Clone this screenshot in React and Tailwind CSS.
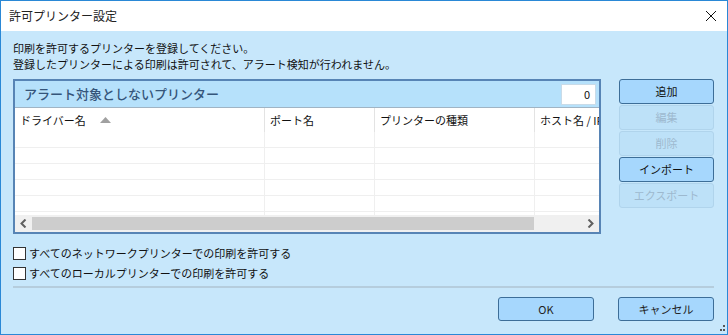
import React from 'react';

const font = { fontFamily: '"Noto Sans CJK JP", "Noto Sans", sans-serif' };

const columns = [
    { label: 'ドライバー名', width: 'w-[250px]', sort: true },
    { label: 'ポート名', width: 'w-[110px]' },
    { label: 'プリンターの種類', width: 'w-[160px]' },
    { label: 'ホスト名 / IPアドレス', width: 'w-[160px]' },
];

const sideButtons = [
    { label: '追加', enabled: true },
    { label: '編集', enabled: false },
    { label: '削除', enabled: false },
    { label: 'インポート', enabled: true },
    { label: 'エクスポート', enabled: false },
];

function SideButton({ label, enabled }) {
    return enabled ? (
        <button className="h-[25px] w-full rounded-[3px] border border-[#3d6e98] bg-[#a6d7fd] text-[11px] leading-none text-[#111]">
            {label}
        </button>
    ) : (
        <button disabled className="h-[25px] w-full rounded-[3px] border border-[#b0d4ec] bg-[#bde1f8] text-[11px] leading-none text-[#9db9cf]">
            {label}
        </button>
    );
}

function Checkbox({ label }) {
    return (
        <label className="flex h-[20px] items-center gap-[3px] text-[11px] text-[#111]">
            <span className="h-[13px] w-[13px] border border-[#333] bg-white"></span>
            <span>{label}</span>
        </label>
    );
}

function PrinterTable() {
    const rows = [0, 1, 2, 3, 4, 5];
    return (
        <div className="flex flex-1 flex-col overflow-hidden border-t border-[#a0b4c4] bg-white">
            <div className="flex h-[24px] shrink-0 overflow-hidden">
                {columns.map((c, i) => (
                    <div key={i} className={`${c.width} flex shrink-0 items-center whitespace-nowrap border-r border-[#e3e3e3] pl-[5px] text-[11px] text-[#111]`}>
                        <span>{c.label}</span>
                        {c.sort && (
                            <svg width="11" height="6" viewBox="0 0 11 6" className="ml-[14px]">
                                <path d="M0 6 L5.5 0 L11 6 Z" fill="#a0a0a0" />
                            </svg>
                        )}
                    </div>
                ))}
            </div>
            <div className="flex flex-1 flex-col overflow-hidden">
                {rows.map(r => (
                    <div key={r} className="flex h-[16px] shrink-0 border-b border-[#efefef]">
                        {columns.map((c, i) => (
                            <div key={i} className={`${c.width} shrink-0 border-r border-[#efefef]`}></div>
                        ))}
                    </div>
                ))}
            </div>
            <div className="flex h-[17px] shrink-0 items-center bg-[#f0f0f0]">
                <div className="flex w-[17px] items-center justify-center">
                    <svg width="7" height="9" viewBox="0 0 7 9">
                        <path d="M5.5 0.5 L1.5 4.5 L5.5 8.5" stroke="#606060" strokeWidth="2" fill="none" />
                    </svg>
                </div>
                <div className="h-[13px] w-[502px] bg-[#cdcdcd]"></div>
                <div className="flex-1"></div>
                <div className="flex w-[17px] items-center justify-center">
                    <svg width="7" height="9" viewBox="0 0 7 9">
                        <path d="M1.5 0.5 L5.5 4.5 L1.5 8.5" stroke="#606060" strokeWidth="2" fill="none" />
                    </svg>
                </div>
            </div>
        </div>
    );
}

export default function App() {
    return (
        <div style={font} className="relative flex h-[335px] w-[728px] flex-col border border-[#2a88d6] bg-white">
            {/* title bar */}
            <div className="flex h-[30px] shrink-0 items-center justify-between bg-white pl-[8px] pr-[10px]">
                <span className="text-[12px] text-[#222]">許可プリンター設定</span>
                <svg width="12" height="12" viewBox="0 0 12 12">
                    <path d="M1 1 L11 11 M11 1 L1 11" stroke="#111" strokeWidth="1" />
                </svg>
            </div>

            {/* body */}
            <div className="flex flex-1 flex-col bg-[#c7e7fb] pl-[12px] pr-[13px] pt-[9px]">
                <p className="text-[11px] leading-[16px] text-[#111]">印刷を許可するプリンターを登録してください。</p>
                <p className="text-[11px] leading-[16px] text-[#111]">登録したプリンターによる印刷は許可されて、アラート検知が行われません。</p>

                <div className="mt-[7px] flex">
                    <div className="flex h-[155px] w-[588px] flex-col border-2 border-[#5784b5]">
                        <div className="flex h-[26px] shrink-0 items-center justify-between bg-[#b6e1fb] pl-[9px] pr-[3px]">
                            <span className="text-[13px] font-medium text-[#35557a]">アラート対象としないプリンター</span>
                            <div className="flex h-[21px] w-[35px] items-center justify-end border border-[#c9dbe8] bg-white pr-[5px] text-[11px] text-[#111]">0</div>
                        </div>
                        <PrinterTable />
                    </div>
                    <div className="ml-[18px] flex w-[95px] flex-col gap-[1px]">
                        {sideButtons.map(b => (
                            <SideButton key={b.label} {...b} />
                        ))}
                    </div>
                </div>

                <div className="mt-[9px] flex flex-col">
                    <Checkbox label="すべてのネットワークプリンターでの印刷を許可する" />
                    <Checkbox label="すべてのローカルプリンターでの印刷を許可する" />
                </div>

                <div className="mt-[3px] h-[2px] w-full bg-[#b5cddd]"></div>

                <div className="mt-[9px] flex justify-end gap-[24px]">
                    <button className="h-[24px] w-[96px] rounded-[3px] border border-[#3d6e98] bg-[#a6d7fd] text-[11px] text-[#222]">OK</button>
                    <button className="h-[24px] w-[96px] rounded-[3px] border border-[#3d6e98] bg-[#a6d7fd] text-[11px] text-[#222]">キャンセル</button>
                </div>
            </div>

            {/* resize grip */}
            <svg width="7" height="7" viewBox="0 0 7 7" className="absolute bottom-[2px] right-[2px]">
                <rect x="5" y="0" width="2" height="2" fill="#555" />
                <rect x="2" y="4" width="2" height="2" fill="#555" />
                <rect x="5" y="4" width="2" height="2" fill="#555" />
            </svg>
        </div>
    );
}
